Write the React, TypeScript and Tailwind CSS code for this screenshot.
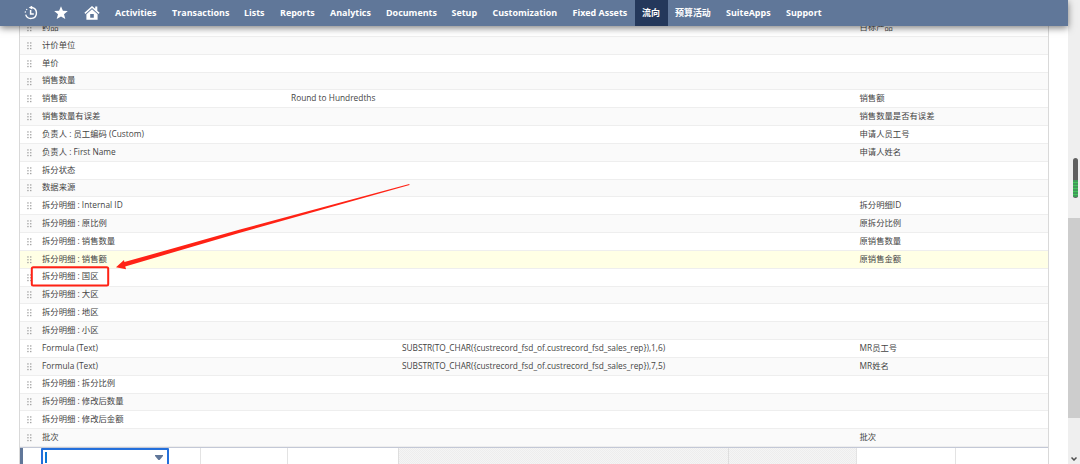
import clsx from "clsx";

interface NavItem {
  label: string;
  width: string;
  active?: boolean;
}

interface ResultRow {
  field: string;
  fn?: string;
  formula?: string;
  label?: string;
  highlighted?: boolean;
}

const NAV_ITEMS: NavItem[] = [
  { label: "Activities", width: "w-[57px]" },
  { label: "Transactions", width: "w-[72px]" },
  { label: "Lists", width: "w-[36px]" },
  { label: "Reports", width: "w-[50px]" },
  { label: "Analytics", width: "w-[56px]" },
  { label: "Documents", width: "w-[65.5px]" },
  { label: "Setup", width: "w-[41px]" },
  { label: "Customization", width: "w-[80px]" },
  { label: "Fixed Assets", width: "w-[69.5px]" },
  { label: "流向", width: "w-[33px]", active: true },
  { label: "预算活动", width: "w-[51px]" },
  { label: "SuiteApps", width: "w-[60px]" },
  { label: "Support", width: "w-[50px]" },
];

const ROWS: ResultRow[] = [
  { field: "药品", label: "目标产品" },
  { field: "计价单位" },
  { field: "单价" },
  { field: "销售数量" },
  { field: "销售额", fn: "Round to Hundredths", label: "销售额" },
  { field: "销售数量有误差", label: "销售数量是否有误差" },
  { field: "负责人 : 员工编码 (Custom)", label: "申请人员工号" },
  { field: "负责人 : First Name", label: "申请人姓名" },
  { field: "拆分状态" },
  { field: "数据来源" },
  { field: "拆分明细 : Internal ID", label: "拆分明细ID" },
  { field: "拆分明细 : 原比例", label: "原拆分比例" },
  { field: "拆分明细 : 销售数量", label: "原销售数量" },
  { field: "拆分明细 : 销售额", label: "原销售金额", highlighted: true },
  { field: "拆分明细 : 国区" },
  { field: "拆分明细 : 大区" },
  { field: "拆分明细 : 地区" },
  { field: "拆分明细 : 小区" },
  {
    field: "Formula (Text)",
    formula: "SUBSTR(TO_CHAR({custrecord_fsd_of.custrecord_fsd_sales_rep}),1,6)",
    label: "MR员工号",
  },
  {
    field: "Formula (Text)",
    formula: "SUBSTR(TO_CHAR({custrecord_fsd_of.custrecord_fsd_sales_rep}),7,5)",
    label: "MR姓名",
  },
  { field: "拆分明细 : 拆分比例" },
  { field: "拆分明细 : 修改后数量" },
  { field: "拆分明细 : 修改后金额" },
  { field: "批次", label: "批次" },
];

function HistoryIcon() {
  return (
    <svg viewBox="0 0 14 14" className="h-[14px] w-[14px]" fill="none" stroke="white">
      <path d="M7.8 1.5A5.5 5.5 0 1 1 1.7 8.6" strokeWidth="1.4" />
      <path d="M1.2 6.6l.3-1.2M2.3 4l.8-1" strokeWidth="1.2" />
      <path d="M6.6 3.9v4h3.2" strokeWidth="1.5" />
      <path d="M8.2-.4v3.8L4.8 1.5z" fill="white" stroke="none" />
    </svg>
  );
}

function StarIcon() {
  return (
    <svg viewBox="0 0 14 14" className="h-[14px] w-[14px]" fill="white">
      <path d="M7 .2l1.9 4.6 4.9.3-3.8 3.1 1.3 4.9L7 10.4l-4.3 2.7L4 8.2.2 5.1l4.9-.3z" />
    </svg>
  );
}

function HomeIcon() {
  return (
    <svg viewBox="0 0 16 14" className="h-[14px] w-4" fill="white">
      <path d="M8 0L.4 6.8l1 1.1L8 2.1l6.6 5.8 1-1.1-2.3-2.1V.4h-2.1v2.4z" />
      <path fillRule="evenodd" d="M8 3.3L2.4 8.2v5.6h11.2V8.2zM6.2 8h3.6v3.7H6.2z" />
    </svg>
  );
}

function DragHandle() {
  return (
    <svg viewBox="0 0 5 8" className="ml-[7px] mt-[2px] h-2 w-[5px]" fill="#9c9c9c">
      {[0.3, 3.1, 5.9].map((y) => (
        <g key={y}>
          <rect x="0.3" y={y} width="1.3" height="1.3" />
          <rect x="3.1" y={y} width="1.3" height="1.3" />
        </g>
      ))}
    </svg>
  );
}

function NavBar() {
  return (
    <header className="relative z-20 flex h-[26px] w-[1068px] shrink-0 bg-[#607799] shadow-[0_2px_7px_rgba(0,0,0,0.5)]">
      <div className="flex w-[107.5px] shrink-0 items-center gap-4 pl-[24.4px]">
        <HistoryIcon />
        <StarIcon />
        <HomeIcon />
      </div>
      <nav className="flex text-[8.95px] font-bold text-white">
        {NAV_ITEMS.map(({ label, width, active }) => (
          <a
            key={label}
            className={clsx(
              "flex items-center whitespace-nowrap pl-[7.5px]",
              width,
              active && "bg-[#24385b]"
            )}
          >
            {label}
          </a>
        ))}
      </nav>
    </header>
  );
}

function TableRow({ row, striped }: { row: ResultRow; striped: boolean }) {
  return (
    <div
      className={clsx(
        "grid h-[17.83px] shrink-0 grid-cols-[22px_249px_111px_457.5px_1fr] items-center whitespace-nowrap border-b border-[#eeeeee] pb-px",
        row.highlighted ? "bg-[#ffffe5]" : striped ? "bg-[#fafafa]" : "bg-white"
      )}
    >
      <DragHandle />
      <span>{row.field}</span>
      <span>{row.fn}</span>
      <span className="tracking-[-0.02px]">{row.formula}</span>
      <span>{row.label}</span>
    </div>
  );
}

function EditRow() {
  return (
    <div className="flex h-[17px] shrink-0 border-t border-[#c3c8d6] bg-white">
      <div className="w-[3px] bg-[#607799]" />
      <div className="flex w-[178px] border-r border-[#e3e3e3] pl-[18px]">
        <div className="flex h-5 w-[128px] justify-between rounded-[1px] border-2 border-[#236fdb] bg-white pl-[2px] pr-[4px] pt-[2px]">
          <div className="h-[11px] w-[2px] bg-[#0a77d5]" />
          <svg viewBox="0 0 8 5" className="mt-[3px] h-[5px] w-2" fill="#607799">
            <path d="M0 0h8v1L4.6 5H3.4L0 1z" />
          </svg>
        </div>
      </div>
      <div className="w-[87px] border-r border-[#e3e3e3]" />
      <div className="w-[110px]" />
      <div className="w-[331px] border-x border-[#dedede] bg-[repeating-conic-gradient(#ededed_0_25%,#f5f5f5_0_50%)] bg-[length:2px_2px]" />
      <div className="w-[127px] bg-[repeating-conic-gradient(#ededed_0_25%,#f5f5f5_0_50%)] bg-[length:2px_2px]" />
      <div className="w-[100px] border-x border-[#e3e3e3]" />
    </div>
  );
}

function ScrollBar() {
  return (
    <aside className="flex w-3 shrink-0 flex-col bg-[#efefef]">
      <div className="flex h-[218px] justify-end pr-[2px] pt-[158px]">
        <div className="flex h-10 w-[5px] flex-col overflow-hidden rounded-full bg-[#606060]">
          <div className="mt-[22px] h-[17px] bg-[repeating-linear-gradient(#3f9a58_0_2px,#43c55b_2px_3px)]" />
        </div>
      </div>
      <div className="h-[200px] bg-[#cdcdcd]" />
      <div className="flex flex-1 items-end justify-center pb-[3px]">
        <svg viewBox="0 0 6 4" className="h-1 w-[6px]" fill="none" stroke="#505050" strokeWidth="1.5">
          <path d="M.5.5L3 3 5.5.5" />
        </svg>
      </div>
    </aside>
  );
}

// Red arrow and frame drawn over the 国区 row
function Annotation() {
  return (
    <svg viewBox="0 0 1080 464" className="pointer-events-none absolute inset-0 z-10 h-[464px] w-[1080px]">
      <rect x="31.8" y="267.2" width="76.4" height="18.4" rx="1.5" fill="none" stroke="#ff2215" strokeWidth="2" />
      <path d="M116 267.3l8-7.3.4 2.1L240 229.6 409.3 184l.2.9L240 232.8l-114.8 33.6.9 2.8z" fill="#ff2215" />
    </svg>
  );
}

export default function App() {
  return (
    <div className="relative flex h-[464px] w-[1080px] overflow-hidden bg-white font-['Open_Sans','Noto_Sans_CJK_SC',sans-serif]">
      <div className="flex w-[1068px] flex-col">
        <NavBar />
        <main className="ml-[19px] flex min-h-0 w-[1030px] flex-1 flex-col justify-end overflow-hidden border-x border-[#d9d9d9] text-[8.33px] leading-none text-[#444444]">
          {ROWS.map((row, i) => (
            <TableRow key={i} row={row} striped={i % 2 === 1} />
          ))}
          <EditRow />
        </main>
      </div>
      <ScrollBar />
      <Annotation />
    </div>
  );
}
